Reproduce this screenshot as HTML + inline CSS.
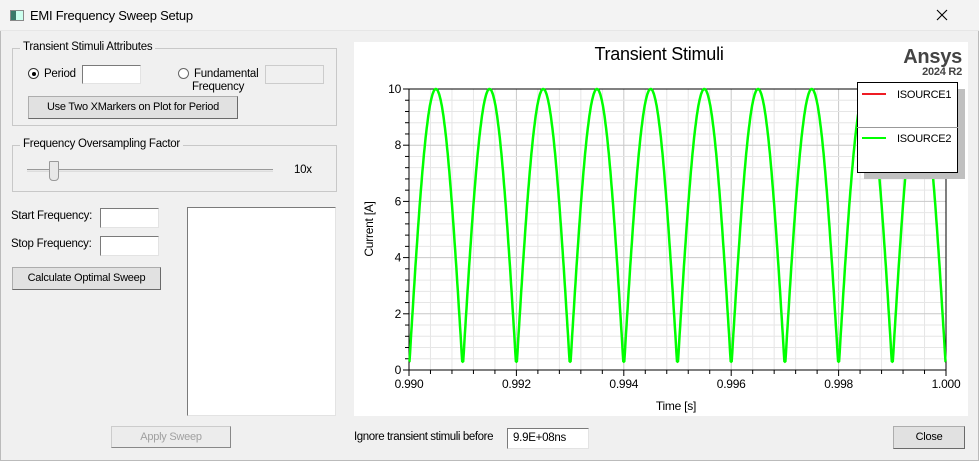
<!DOCTYPE html>
<html><head><meta charset="utf-8"><style>
*{box-sizing:border-box;margin:0;padding:0}
body{width:979px;height:461px;background:#f0f0f0;font-family:"Liberation Sans",sans-serif;font-size:11.5px;letter-spacing:-0.25px;color:#000;position:relative;overflow:hidden}
.a{position:absolute}
.tb{left:0;top:0;width:979px;height:31px;background:#f3f3f3;border-bottom:1px solid #e6e6e6}
fieldset{position:absolute;border:1px solid #c8c8c8}
.lg{position:absolute;background:#f0f0f0;padding:0 3px}
.in{position:absolute;background:#fff;border:1px solid #7a7a7a;border-right-color:#e3e3e3;border-bottom-color:#e3e3e3}
.bt{position:absolute;background:#e1e1e1;border:1px solid #adadad;border-right-color:#6a6a6a;border-bottom-color:#6a6a6a;text-align:center;font-size:11px}
.rd{position:absolute;width:11px;height:11px;border-radius:50%;border:1px solid #333;background:#fff}
</style></head><body>
<div class="a tb"></div>
<div class="a" style="left:10px;top:10px;width:14px;height:11px;border:1px solid #888;background:linear-gradient(90deg,#3a7a6a 40%,#cfe 40%)"></div>
<div class="a" style="left:30px;top:8px;font-size:13px">EMI Frequency Sweep Setup</div>
<svg class="a" style="left:936px;top:9px" width="12" height="12"><path d="M1 1L11 11M11 1L1 11" stroke="#000" stroke-width="1.1"/></svg>
<div class="a" style="left:0;top:31px;width:979px;height:430px;border:1px solid #bbb;border-top:none"></div>

<fieldset style="left:12px;top:48px;width:325px;height:78px"></fieldset>
<div class="lg a" style="left:20px;top:41px">Transient Stimuli Attributes</div>
<div class="rd" style="left:28px;top:68px"><div class="a" style="left:3px;top:3px;width:4px;height:4px;border-radius:50%;background:#000"></div></div>
<div class="a" style="left:44px;top:68px">Period</div>
<div class="in" style="left:82px;top:65px;width:59px;height:19px"></div>
<div class="rd" style="left:178px;top:68px;border-color:#666"></div>
<div class="a" style="left:194px;top:68px;line-height:13px">Fundamental<br><span style="margin-left:-2px">Frequency</span></div>
<div class="in" style="left:265px;top:65px;width:59px;height:19px;background:#f0f0f0;border-color:#ccc"></div>
<div class="bt" style="left:28px;top:96px;width:210px;height:23px;line-height:21px">Use Two XMarkers on Plot for Period</div>

<fieldset style="left:12px;top:145px;width:325px;height:47px"></fieldset>
<div class="lg a" style="left:20px;top:138px">Frequency Oversampling Factor</div>
<div class="a" style="left:27px;top:169px;width:246px;height:3px;border-top:1px solid #999;border-bottom:1px solid #ddd;background:#e7e7e7"></div>
<div class="a" style="left:49px;top:161px;width:10px;height:20px;background:#e8e8e8;border:1px solid #999;border-radius:1px 1px 4px 4px"></div>
<div class="a" style="left:294px;top:164px">10x</div>

<div class="a" style="left:11px;top:210px">Start Frequency:</div>
<div class="in" style="left:100px;top:208px;width:59px;height:20px"></div>
<div class="a" style="left:11px;top:238px">Stop Frequency:</div>
<div class="in" style="left:100px;top:236px;width:59px;height:20px"></div>
<div class="bt" style="left:12px;top:267px;width:149px;height:23px;line-height:21px">Calculate Optimal Sweep</div>
<div class="in" style="left:187px;top:207px;width:149px;height:209px"></div>
<div class="bt" style="left:111px;top:426px;width:120px;height:22px;line-height:20px;color:#a0a0a0;background:#ececec;border-color:#ccc;border-right-color:#888;border-bottom-color:#888">Apply Sweep</div>

<div class="a" style="left:354px;top:42px;width:614px;height:374px;background:#fff"></div>
<svg class="a" style="left:0;top:0" width="979" height="461" id="s">
<g id="grid"></g>
<text x="659" y="60" font-size="18" text-anchor="middle" font-family="Liberation Sans">Transient Stimuli</text>
<text x="962" y="63" font-size="20" font-weight="bold" fill="#444" text-anchor="end" font-family="Liberation Sans">Ansys</text>
<text x="962" y="75" font-size="11" font-weight="bold" fill="#444" text-anchor="end" font-family="Liberation Sans">2024 R2</text>
<text x="676" y="410" font-size="12" text-anchor="middle" font-family="Liberation Sans">Time [s]</text>
<text transform="translate(373,229) rotate(-90)" font-size="12" text-anchor="middle" font-family="Liberation Sans">Current [A]</text>
<polyline id="cv" fill="none" stroke="#00ff00" stroke-width="2.5"/>
<rect x="864" y="89" width="101" height="90" fill="#c0c0c0"/>
<rect x="857.5" y="82.5" width="100" height="90" fill="#fff" stroke="#000"/>
<line x1="857" y1="127.5" x2="958" y2="127.5" stroke="#999"/>
<line x1="862" y1="94" x2="886" y2="94" stroke="#ee1c24" stroke-width="2"/>
<line x1="862" y1="138" x2="886" y2="138" stroke="#00ff00" stroke-width="2"/>
<text x="897" y="98" font-size="11" font-family="Liberation Sans">ISOURCE1</text>
<text x="897" y="142" font-size="11" font-family="Liberation Sans">ISOURCE2</text>
</svg>
<div class="a" style="left:354px;top:431px;letter-spacing:-0.4px">Ignore transient stimuli before</div>
<div class="in" style="left:507px;top:428px;width:82px;height:21px;padding:3px 5px">9.9E+08ns</div>
<div class="bt" style="left:893px;top:426px;width:72px;height:23px;line-height:21px">Close</div>
<script>
var g='',X0=409,X1=946,Y0=370,Y1=89,W=X1-X0,H=Y0-Y1;
for(var i=0;i<=25;i++){var x=X0+W*i/25;g+='<line x1="'+x+'" y1="'+Y1+'" x2="'+x+'" y2="'+Y0+'" stroke="'+(i%5?'#e6e6e6':'#c8c8c8')+'"/>';
 g+='<line x1="'+x+'" y1="'+Y0+'" x2="'+x+'" y2="'+(Y0+(i%5?4:6))+'" stroke="#000"/>';
 if(i%5==0)g+='<text x="'+x+'" y="'+(Y0+18)+'" font-size="12" text-anchor="middle" font-family="Liberation Sans">'+(0.990+0.002*i/5).toFixed(3)+'</text>';}
for(var j=0;j<=25;j++){var y=Y0-H*j/25;g+='<line x1="'+X0+'" y1="'+y+'" x2="'+X1+'" y2="'+y+'" stroke="'+(j%5?'#e6e6e6':'#c8c8c8')+'"/>';
 g+='<line x1="'+X0+'" y1="'+y+'" x2="'+(X0-(j%5?4:6))+'" y2="'+y+'" stroke="#000"/>';
 if(j%5==0)g+='<text x="'+(X0-8)+'" y="'+(y+4)+'" font-size="12" text-anchor="end" font-family="Liberation Sans">'+(j*2/5)+'</text>';}
g+='<rect x="'+X0+'" y="'+Y1+'" width="'+W+'" height="'+H+'" fill="none" stroke="#000"/>';
document.getElementById('grid').innerHTML=g;
var p=[];for(var k=0;k<=1000;k++){var t=k/1000,v=Math.abs(Math.sin(Math.PI*10*t));v=Math.max(v,0.03);p.push((X0+W*t).toFixed(1)+','+(Y0-H*v).toFixed(1));}
document.getElementById('cv').setAttribute('points',p.join(' '));
</script>
</body></html>
